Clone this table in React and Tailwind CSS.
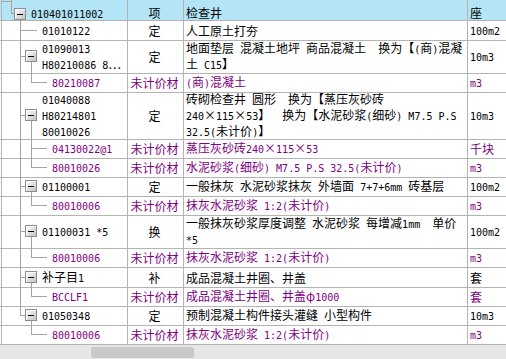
import React from "react";

const P = "text-[#800080]";

function Txt({ s }) {
  const parts = s.split(/([\x20-\x7e]+)/);
  return parts.map((p, i) =>
    p === "" ? null : /^[\x20-\x7e]+$/.test(p) ? (
      <span key={i} className="font-['DejaVu_Sans_Mono',monospace] text-[10px]">{p}</span>
    ) : (
      <span key={i}>{p}</span>
    )
  );
}

function Lines({ v }) {
  const arr = Array.isArray(v) ? v : [v];
  return (
    <div className="flex flex-col">
      {arr.map((s, i) => (
        <div key={i} className="whitespace-pre">
          <Txt s={s} />
        </div>
      ))}
    </div>
  );
}

function Box({ cls, style }) {
  return (
    <div
      className={`absolute w-[12px] h-[12px] border border-[#8e8e8e] bg-linear-to-br from-white to-[#c2c2c2] shadow-[inset_1px_1px_0_#fff] flex items-center justify-center ${cls}`}
      style={style}
    >
      <div className="w-[6px] h-px bg-black" />
    </div>
  );
}

const rows = [
  { h: "h-[20px]", n: 20, lvl: 1, c1: "01010122", c2: "定", c3: "人工原土打夯", c4: "100m2" },
  { h: "h-[33px]", n: 33, lvl: 1, box: true, c1: ["01090013", "H80210086 8⋯"], c2: "定", c3: ["地面垫层 混凝土地坪 商品混凝土  换为【(商)混凝", "土 C15】"], c4: "10m3" },
  { h: "h-[19px]", n: 19, lvl: 2, last: true, p: true, c1: "80210087", c2: "未计价材", c3: "(商)混凝土", c4: "m3" },
  { h: "h-[47px]", n: 47, lvl: 1, box: true, c1: ["01040088", "H80214801", "80010026"], c2: "定", c3: ["砖砌检查井 圆形  换为【蒸压灰砂砖", "240×115×53】  换为【水泥砂浆(细砂) M7.5 P.S", "32.5(未计价)】"], c4: "10m3" },
  { h: "h-[19px]", n: 19, lvl: 2, p: true, c1: "04130022@1", c2: "未计价材", c3: "蒸压灰砂砖240×115×53", c4: "千块" },
  { h: "h-[19px]", n: 19, lvl: 2, last: true, p: true, c1: "80010026", c2: "未计价材", c3: "水泥砂浆(细砂) M7.5 P.S 32.5(未计价)", c4: "m3" },
  { h: "h-[19px]", n: 19, lvl: 1, box: true, c1: "01100001", c2: "定", c3: "一般抹灰 水泥砂浆抹灰 外墙面 7+7+6mm 砖基层", c4: "100m2" },
  { h: "h-[19px]", n: 19, lvl: 2, last: true, p: true, c1: "80010006", c2: "未计价材", c3: "抹灰水泥砂浆 1:2(未计价)", c4: "m3" },
  { h: "h-[33px]", n: 33, lvl: 1, box: true, c1: "01100031 *5", c2: "换", c3: ["一般抹灰砂浆厚度调整 水泥砂浆 每增减1mm  单价", "*5"], c4: "100m2" },
  { h: "h-[19px]", n: 19, lvl: 2, last: true, p: true, c1: "80010006", c2: "未计价材", c3: "抹灰水泥砂浆 1:2(未计价)", c4: "m3" },
  { h: "h-[20px]", n: 20, lvl: 1, box: true, c1: "补子目1", c2: "补", c3: "成品混凝土井圈、井盖", c4: "套" },
  { h: "h-[19px]", n: 19, lvl: 2, last: true, p: true, c1: "BCCLF1", c2: "未计价材", c3: "成品混凝土井圈、井盖φ1000", c4: "套" },
  { h: "h-[19px]", n: 19, lvl: 1, box: true, lastL1: true, c1: "01050348", c2: "定", c3: "预制混凝土构件接头灌缝 小型构件", c4: "10m3" },
  { h: "h-[19px]", n: 19, lvl: 2, last: true, p: true, after: true, c1: "80010006", c2: "未计价材", c3: "抹灰水泥砂浆 1:2(未计价)", c4: "m3" },
];

function Row({ r }) {
  const c = Math.floor((r.n - 2) / 2);
  const col = r.p ? P : "text-black";
  const L = "absolute bg-[#a3a3a3]";
  return (
    <div className={`relative flex pl-px border-b border-[#b4b4b4] ${r.h}`}>
      {!r.after && !r.lastL1 && <div className={`${L} left-[20px] top-0 bottom-[-1px] w-px`} />}
      {r.lastL1 && <div className={`${L} left-[20px] top-0 w-px`} style={{ height: c + 1 }} />}
      {r.lvl === 1 && !r.box && <div className={`${L} left-[20px] w-[17px] h-px`} style={{ top: c }} />}
      {r.lvl === 1 && r.box && (
        <>
          <div className={`${L} left-[20px] w-[5px] h-px`} style={{ top: c }} />
          <Box cls="left-[25px]" style={{ top: c - 6 }} />
          <div className={`${L} left-[31px] bottom-[-1px] w-px`} style={{ top: c + 6 }} />
        </>
      )}
      {r.lvl === 2 && (
        <>
          {r.last ? (
            <div className={`${L} left-[31px] top-0 w-px`} style={{ height: c + 1 }} />
          ) : (
            <div className={`${L} left-[31px] top-0 bottom-[-1px] w-px`} />
          )}
          <div className={`${L} left-[31px] w-[16px] h-px`} style={{ top: c }} />
        </>
      )}
      <div className={`w-[127px] shrink-0 border-l border-r border-[#b4b4b4] flex items-center ${col} ${r.lvl === 1 ? "pl-[40px]" : "pl-[50px]"}`}>
        <Lines v={r.c1} />
      </div>
      <div className={`w-[56px] shrink-0 border-r border-[#b4b4b4] flex items-center justify-center pr-[2px] ${col}`}>
        <Lines v={r.c2} />
      </div>
      <div className={`w-[284px] shrink-0 border-r border-[#b4b4b4] flex items-center pl-[2px] ${col}`}>
        <Lines v={r.c3} />
      </div>
      <div className={`flex-1 flex items-center pl-[2px] ${col}`}>
        <Lines v={r.c4} />
      </div>
    </div>
  );
}

export default function App() {
  return (
    <div className="w-[506px] h-[359px] overflow-hidden bg-white text-[12px] leading-[14px] font-['Noto_Sans_CJK_SC',sans-serif] text-black flex flex-col">
      <div className="relative flex pl-px h-[21px] shrink-0 bg-[#b3e5f7] border-b border-[#b4b4b4]">
        <div className="absolute bg-[#a3a3a3] left-[11px] top-0 w-px h-[14px]" />
        <div className="absolute bg-[#a3a3a3] left-[1px] top-[1px] w-[10px] h-px" />
        <div className="absolute bg-[#a3a3a3] left-[11px] top-[13px] w-[3px] h-px" />
        <Box cls="left-[14px] top-[8px]" />
        <div className="absolute bg-[#a3a3a3] left-[20px] top-[20px] w-px h-px" />
        <div className="w-[127px] shrink-0 border-l border-r border-[#b4b4b4] pl-[29px] pt-[6px]">
          <Lines v="010401011002" />
        </div>
        <div className="w-[56px] shrink-0 border-r border-[#b4b4b4] flex justify-center pr-[2px] pt-[6px]">
          <Lines v="项" />
        </div>
        <div className="w-[284px] shrink-0 border-r border-[#b4b4b4] pl-[2px] pt-[6px]">
          <Lines v="检查井" />
        </div>
        <div className="flex-1 pl-[2px] pt-[6px]">
          <Lines v="座" />
        </div>
      </div>
      {rows.map((r, i) => (
        <Row key={i} r={r} />
      ))}
      <div className="h-[14px] shrink-0 bg-[#e6e6e6] pl-[91px] pt-[2px]">
        <div className="w-[103px] h-[11px] rounded-[3px] bg-[#c8c8c8]" />
      </div>
    </div>
  );
}
